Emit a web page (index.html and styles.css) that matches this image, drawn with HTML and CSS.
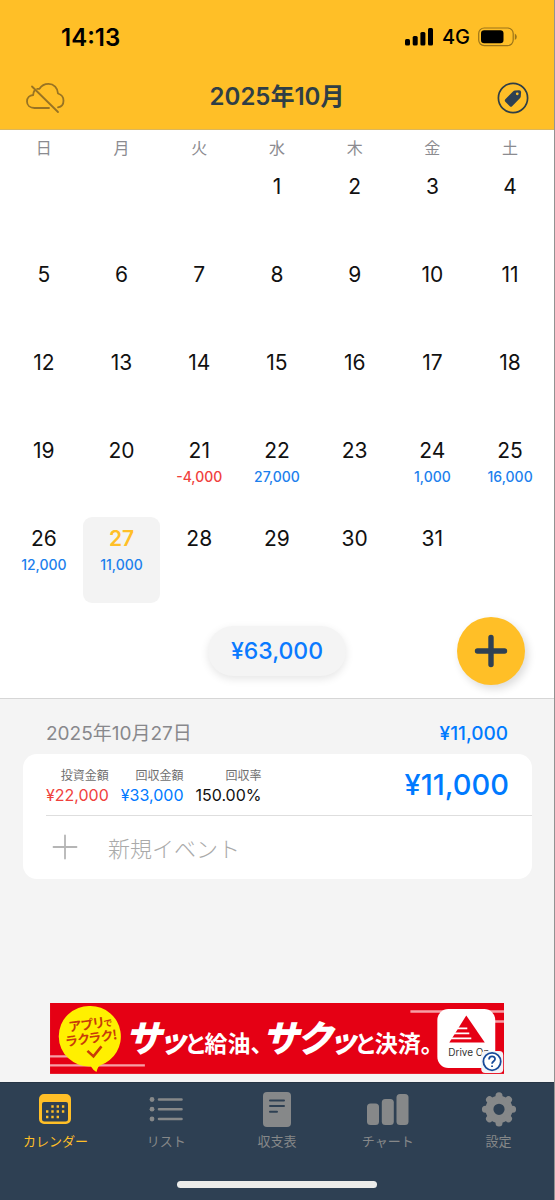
FILE: index.html
```html
<!DOCTYPE html>
<html lang="ja">
<head>
<meta charset="utf-8">
<meta name="viewport" content="width=device-width, initial-scale=1">
<title>2025年10月</title>
<link rel="stylesheet" href="styles.css">
</head>
<body>
<div class="app">
  <header class="top">
    <div class="status">
      <span class="clock">14:13</span>
      <div class="status-right">
        <svg width="29" height="18" viewBox="0 0 29 18" aria-hidden="true"><rect x="0" y="11" width="5" height="6.500" rx="1.500"/><rect x="7.700" y="8" width="5" height="9.500" rx="1.500"/><rect x="15.400" y="4" width="5" height="13.500" rx="1.500"/><rect x="23" y="0" width="5" height="17.500" rx="1.500"/></svg>
        <span class="network">4G</span>
        <svg width="39" height="20" viewBox="0 0 39 20" aria-hidden="true"><rect x="0.700" y="1" width="34.500" height="17.600" rx="5.500" fill="none" stroke="#9b741a" stroke-width="1.200"/><rect x="3" y="3.300" width="22.500" height="13" rx="3.200"/><path d="M36.800 6.500q2 1.200 2 3.300t-2 3.300z" fill="#9b741a"/></svg>
      </div>
    </div>
    <div class="nav">
      <button class="icon-button" aria-label="クラウド同期オフ">
        <svg width="40" height="34" viewBox="0 0 40 34" fill="none" stroke="#987323" stroke-width="1.800" stroke-linecap="round" stroke-linejoin="round"><path d="M24 27H9.500C5 27 2 24.200 2 20.400c0-3.700 2.700-6.200 6.200-6.400 0-1.900.4-3 1.300-4.400M14.500 7.800C16.500 4.500 19.700 2.800 23.500 2.800c5.300 0 9.300 4 9.500 9.700 3.500 1 5.500 3.800 5.500 7.200 0 3.200-2 6-5.500 6.700M7 5.500 33 31M14.500 7.800h-2.300"/></svg>
      </button>
      <h1 class="title">2025年10月</h1>
      <button class="icon-button" aria-label="タグ">
        <svg width="32" height="32" viewBox="0 0 32 32"><circle cx="16" cy="16" r="14.600" fill="none" stroke="#2f3e46" stroke-width="1.700"/><path fill="#2e4053" fill-rule="evenodd" d="M8.300 17.300 16 9.600q.8-.8 2-1l4-.4q2.100-.1 2.100 2l-.3 4q0 1.200-.9 2.100l-7.800 7.900q-1.200 1-2.300 0l-4.500-4.500q-1.100-1.100 0-2.400zM20.200 10.400a1.400 1.400 0 1 0 .1 2.800 1.400 1.400 0 0 0-.1-2.800z"/></svg>
      </button>
    </div>
  </header>

  <main class="main">
    <section class="calendar">
      <table class="month">
        <thead><tr><th>日</th><th>月</th><th>火</th><th>水</th><th>木</th><th>金</th><th>土</th></tr></thead>
        <tbody>
          <tr><td></td><td></td><td></td><td><button class="day">1</button></td><td><button class="day">2</button></td><td><button class="day">3</button></td><td><button class="day">4</button></td></tr>
          <tr><td><button class="day">5</button></td><td><button class="day">6</button></td><td><button class="day">7</button></td><td><button class="day">8</button></td><td><button class="day">9</button></td><td><button class="day">10</button></td><td><button class="day">11</button></td></tr>
          <tr><td><button class="day">12</button></td><td><button class="day">13</button></td><td><button class="day">14</button></td><td><button class="day">15</button></td><td><button class="day">16</button></td><td><button class="day">17</button></td><td><button class="day">18</button></td></tr>
          <tr><td><button class="day">19</button></td><td><button class="day">20</button></td><td><button class="day">21<span class="amount minus">-4,000</span></button></td><td><button class="day">22<span class="amount">27,000</span></button></td><td><button class="day">23</button></td><td><button class="day">24<span class="amount">1,000</span></button></td><td><button class="day">25<span class="amount">16,000</span></button></td></tr>
          <tr><td><button class="day">26<span class="amount">12,000</span></button></td><td><button class="day selected" aria-pressed="true">27<span class="amount">11,000</span></button></td><td><button class="day">28</button></td><td><button class="day">29</button></td><td><button class="day">30</button></td><td><button class="day">31</button></td><td></td></tr>
        </tbody>
      </table>
      <div class="summary">
        <button class="total">¥63,000</button>
        <button class="add" aria-label="追加"><svg width="34" height="34" viewBox="0 0 34 34" fill="none" stroke="#2e4053" stroke-width="5.400" stroke-linecap="round"><path d="M17 3.500v27M3.500 17h27"/></svg></button>
      </div>
    </section>

    <section class="details">
      <div class="details-head"><h2 class="date">2025年10月27日</h2><span class="day-total">¥11,000</span></div>
      <div class="card">
        <div class="entry">
          <dl class="stats">
            <div class="stat"><dt>投資金額</dt><dd class="minus">¥22,000</dd></div>
            <div class="stat"><dt>回収金額</dt><dd class="plus">¥33,000</dd></div>
            <div class="stat"><dt>回収率</dt><dd>150.00%</dd></div>
          </dl>
          <span class="balance">¥11,000</span>
        </div>
        <button class="new-event"><svg width="26" height="26" viewBox="0 0 26 26" fill="none" stroke="#b5b5b5" stroke-width="1.800" stroke-linecap="round"><path d="M13 1.500v23M1.500 13h23"/></svg>新規イベント</button>
      </div>
    </section>

    <a class="ad" href="#" aria-label="Drive On 広告">
      <svg class="ad-art" viewBox="0 0 455 71">
        <rect width="455" height="71" fill="#e50014"/>
        <path d="M0 53.500h18M0 62.500h95" stroke="#f6a0a6" stroke-width="2.400"/>
        <path d="M361 8.500h94M425 18.500h30" stroke="#f6a0a6" stroke-width="2.400"/>
        <path d="M40.500 3a30.500 30.500 0 0 1 10 59.300Q48 63 46.500 69q-3.500-2-5.500-5.500A30.300 30.300 0 1 1 40.500 3z" fill="#fff000"/>
        <g class="ad-badge" transform="rotate(-8 40 30)"><text x="20" y="26" font-size="13">アプリ<tspan font-size="9">で</tspan></text><text x="15" y="40" font-size="13">ラクラク!</text></g>
        <path d="m37.500 48 6 5.500 8-10" fill="none" stroke="#c83c08" stroke-width="2.600"/>
        <text class="ad-copy" x="75" y="49"><tspan class="big">サ</tspan><tspan class="mid">ッ</tspan>と給油、<tspan class="big">サク</tspan><tspan class="mid">ッ</tspan>と決済。</text>
        <rect x="388" y="6" width="58" height="59" rx="11" fill="#fff"/>
        <path d="m417 12.500 18.500 27H400z" fill="#e50014"/>
        <path d="M400 35.500h22M403 30.500h17M407 25.500h11" stroke="#fff" stroke-width="1.700"/>
        <text class="ad-name" x="399" y="53">Drive On</text>
        <rect x="432" y="48" width="22" height="22" rx="4" fill="#f2f3f7"/>
        <circle cx="442.800" cy="58.700" r="8.700" fill="#fff" stroke="#174a9a" stroke-width="1.800"/>
        <path d="M439.800 56.500c0-4 6-4 6-.4 0 2.300-3 2.200-3 4.700M442.800 62.500v1.500" fill="none" stroke="#174a9a" stroke-width="1.800"/>
      </svg>
    </a>
  </main>

  <footer class="bottom">
    <nav class="tabs">
      <a class="tab active" href="#" aria-current="page">
        <svg width="36" height="36" viewBox="0 0 36 36" fill="currentColor"><path fill-rule="evenodd" d="M7 3h22a5 5 0 0 1 5 5v20a5 5 0 0 1-5 5H7a5 5 0 0 1-5-5V8a5 5 0 0 1 5-5zM7 11q-2 0-2 2v15q0 2.500 2.500 2.500h21q2.500 0 2.500-2.500V13q0-2-2-2z"/><path d="M14.300 15.500h13M9 20.500h19M9 26h13" fill="none" stroke="currentColor" stroke-width="2.400" stroke-dasharray="2.400 2.900"/></svg>
        <span>カレンダー</span></a>
      <a class="tab" href="#">
        <svg width="36" height="36" viewBox="0 0 36 36" fill="currentColor"><circle cx="4" cy="8.500" r="2.400"/><circle cx="4" cy="18.200" r="2.400"/><circle cx="4" cy="28" r="2.400"/><path d="M11 8.500h22.500M11 18.200h22.500M11 28h22.500" stroke="currentColor" stroke-width="2.600" stroke-linecap="round"/></svg>
        <span>リスト</span></a>
      <a class="tab" href="#">
        <svg width="36" height="36" viewBox="0 0 36 36"><rect x="4" y="1" width="28" height="35" rx="4" fill="currentColor"/><path d="M11 9.500h14M11 15h14M11 20.800h7" stroke="#2e4053" stroke-width="2" stroke-linecap="round"/></svg>
        <span>収支表</span></a>
      <a class="tab" href="#">
        <svg width="44" height="36" viewBox="0 0 44 36" fill="currentColor"><rect x="1" y="12.500" width="12" height="21.500" rx="3.500"/><rect x="15.800" y="8" width="12" height="26" rx="3.500"/><rect x="30.500" y="3" width="12" height="31" rx="3.500"/></svg>
        <span>チャート</span></a>
      <a class="tab" href="#">
        <svg width="36" height="36" viewBox="0 0 36 36"><g fill="none" stroke="currentColor"><circle cx="18" cy="18.300" r="9.600" stroke-width="8"/><path stroke-width="7" stroke-linecap="round" d="M18 6.500V4.700M18 30v1.900M6.200 18.300H4.400M29.800 18.300h1.800M9.700 10 8.500 8.800M26.300 26.600l1.200 1.200M9.700 26.600l-1.200 1.200M26.300 10l1.200-1.200"/></g></svg>
        <span>設定</span></a>
    </nav>
    <div class="home-indicator"></div>
  </footer>
</div>
</body>
</html>
```
FILE: styles.css
```css
* { box-sizing: border-box; }
body { margin: 0; font-family: Inter, "Noto Sans CJK JP", sans-serif; color: #111; background: #f4f4f4; }
button { border: 0; padding: 0; background: none; font: inherit; color: inherit; cursor: pointer; }
a { color: inherit; text-decoration: none; }
svg { display: block; flex: none; }
h1, h2, dl, dt, dd { margin: 0; font-weight: 400; }
.app { min-height: 100vh; display: flex; flex-direction: column; border-right: 1px solid #929292; }

.top { background: #ffbf27; border-bottom: 1px solid #dcb65b; }
.status { display: flex; justify-content: space-between; align-items: center; height: 67px; padding: 7px 37px 0 61px; color: #000; }
.clock { font-size: 24px; font-weight: 600; }
.status-right { display: flex; align-items: center; gap: 8px; }
.network { font-size: 20px; font-weight: 500; }
.nav { display: grid; grid-template-columns: 1fr auto 1fr; align-items: center; height: 62px; padding: 0 25px; }
.icon-button { display: flex; justify-self: start; }
.title + .icon-button { justify-self: end; }
.title { font-size: 24px; line-height: 30px; padding-bottom: 3px; font-weight: 600; color: #2f3e46; }

.main { flex: 1; display: flex; flex-direction: column; }
.calendar { background: #fff; border-bottom: 1px solid #d6d6d6; padding: 0 5px; }
.month { width: 100%; table-layout: fixed; border-collapse: collapse; }
.month th { height: 35px; padding: 0 0 2px; font-size: 16px; font-weight: 400; color: #8b8b90; }
.month td { height: 88px; padding: 0; vertical-align: top; }
.day { display: flex; flex-direction: column; align-items: center; width: 100%; height: 86px; padding-top: 8px; border-radius: 9px; font-size: 21px; line-height: 27px; }
.selected { background: #f3f3f3; color: #ffbf27; font-weight: 600; }
.amount { font-size: 14px; line-height: 26px; font-weight: 500; color: #1c80ed; }
.minus { color: #f0413c; }
.plus { color: #007aff; }
.summary { display: grid; grid-template-columns: 1fr auto 1fr; align-items: center; height: 93px; padding: 0 24px 2px 0; }
.total { grid-column: 2; height: 50px; padding: 0 23px; margin-left: 24px; border-radius: 25px; background: #f4f4f4; box-shadow: 0 3px 8px rgba(0, 0, 0, .1); color: #0a7aff; font-size: 23px; font-weight: 500; }
.add { justify-self: end; display: grid; place-items: center; width: 68px; height: 68px; border-radius: 50%; background: #ffbf27; box-shadow: 3px 4px 8px rgba(0, 0, 0, .14); }

.details { padding: 16px 22px 0 23px; }
.details-head { display: flex; justify-content: space-between; align-items: center; height: 39px; padding: 0 24px 1px 23px; }
.date { font-size: 19px; line-height: 24px; color: #88888c; }
.day-total { font-size: 19px; line-height: 24px; font-weight: 500; color: #007aff; }
.card { background: #fff; border-radius: 14px; padding-left: 23px; }
.entry { display: flex; justify-content: space-between; align-items: center; height: 62px; padding-right: 23px; border-bottom: 1px solid #dedede; }
.stats { display: flex; gap: 12px; padding-top: 3px; }
.stat { text-align: right; }
.stat dt { font-size: 12px; line-height: 18px; color: #707070; }
.stat dd { font-size: 16px; line-height: 20px; }
.balance { font-size: 29px; font-weight: 500; color: #007aff; }
.new-event { display: flex; align-items: center; gap: 30px; width: 100%; height: 63px; padding: 0 0 2px 6px; font-size: 22px; font-weight: 300; color: #aaa; }

.ad { display: block; width: 82%; margin: auto auto 8px; }
.ad-art { width: 100%; height: auto; }
.ad-copy, .ad-badge { font-family: "Noto Sans CJK JP", sans-serif; font-feature-settings: "palt"; }
.ad-copy { fill: #fff; font-size: 23px; font-weight: 700; }
.ad-badge { fill: #c83c08; font-weight: 700; }
.big { font-size: 37px; font-weight: 900; font-style: italic; }
.mid { font-size: 30px; font-weight: 900; font-style: italic; }
.ad-name { font-size: 10px; fill: #333; }

.bottom { background: #2e4053; border-top: 1px solid #263545; height: 118px; display: flex; flex-direction: column; justify-content: space-between; align-items: center; padding: 8px 0 12px; }
.tabs { display: grid; grid-template-columns: repeat(5, 1fr); width: 100%; }
.tab { display: flex; flex-direction: column; align-items: center; gap: 4px; color: #868889; font-size: 13px; line-height: 20px; }
.active { color: #ffbf27; }
.home-indicator { width: 36%; height: 7px; border-radius: 4px; background: #ececea; }
```
